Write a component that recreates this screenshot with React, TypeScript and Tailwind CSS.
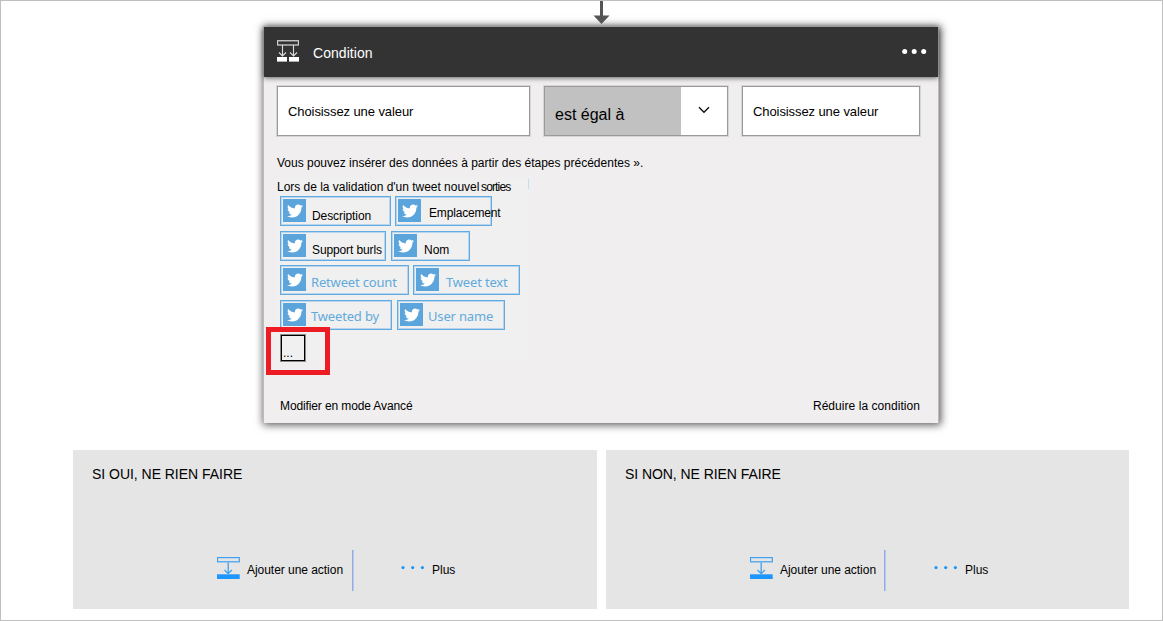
import type { ReactNode } from "react";
import { FaTwitter } from "react-icons/fa";

function ConditionIcon() {
  return (
    <svg width="22" height="22" viewBox="0 0 22 22" fill="none">
      <rect x="0.5" y="0.75" width="21" height="4.25" stroke="#d0d0d0" strokeWidth="1.3" />
      <rect x="0" y="17" width="10" height="4.6" fill="#fff" />
      <rect x="12" y="17" width="10" height="4.6" fill="#fff" />
      <g stroke="#dcdcdc" strokeWidth="1.1">
        <path d="M5.5 5V16M2 12.5L5.5 16L9 12.5" />
        <path d="M16.5 5V16M13 12.5L16.5 16L20 12.5" />
      </g>
    </svg>
  );
}

function ActionIcon() {
  return (
    <svg width="23" height="22" viewBox="0 0 23 22" fill="none">
      <rect x="0.5" y="0.6" width="21.8" height="4.2" stroke="#3f9ff0" strokeWidth="1.2" />
      <rect x="0" y="17.3" width="22.7" height="4.7" fill="#1e96ff" />
      <path d="M11.2 5.5V17M7.5 13L11.2 16.7L14.9 13" stroke="#3f9ff0" strokeWidth="1.3" />
    </svg>
  );
}

function Chip({ box, label, children }: { box: string; label: string; children: ReactNode }) {
  return (
    <div
      className={`flex h-[30px] items-start border border-[#62aadf] pl-[2px] pt-[2px] whitespace-nowrap shadow-[inset_0_0_0_1px_#b5d6ee] ${box}`}
    >
      <div className="flex h-[23px] w-[23px] shrink-0 items-center justify-center bg-[#5ba5dc]">
        <FaTwitter className="h-[16px] w-[16px] text-white" />
      </div>
      <span className={label}>{children}</span>
    </div>
  );
}

function Branch({ box, title, titleSpacing, divider }: { box: string; title: string; titleSpacing: string; divider: string }) {
  return (
    <section className={`h-[159px] bg-[#e5e5e5] pl-[19px] pt-[16px] ${box}`}>
      <h2 className={`text-[14px] leading-4 ${titleSpacing}`}>{title}</h2>
      <div className="mt-[68px] ml-[125px] flex h-[41px] items-start">
        <div className="mt-[7px]">
          <ActionIcon />
        </div>
        <span className="mt-[12px] ml-[7px] w-[105px] whitespace-nowrap text-[12px] leading-4 tracking-[-0.04px]">
          Ajouter une action
        </span>
        <div className={`h-[41px] w-[2px] border-l border-[#90abe6] bg-[#b9c8e8] ${divider}`} />
        <svg className="mt-[15px] ml-[47px]" width="24" height="5" viewBox="0 0 24 5" fill="#1e96f5">
          <circle cx="2" cy="2.6" r="1.6" />
          <circle cx="11.7" cy="2.6" r="1.6" />
          <circle cx="21.4" cy="2.6" r="1.6" />
        </svg>
        <span className="mt-[12px] ml-[7px] text-[12px] leading-4">Plus</span>
      </div>
    </section>
  );
}

export default function App() {
  const blue = "font-['Noto_Sans',sans-serif] text-[13px] leading-4 tracking-[-0.17px] text-[#62aadd]";
  const field = "border border-[#9a9a9a] bg-white shadow-[0_0_0_1px_#d6d5d5]";
  return (
    <div className="flex h-[621px] w-[1163px] flex-col overflow-hidden border border-[#bfbfbf] bg-white font-['Liberation_Sans',Arial,sans-serif] text-black">
      <div className="z-10 h-[25px] shrink-0 pl-[592px]">
        <svg width="17" height="24" viewBox="0 0 17 24">
          <path d="M7 0H10V14.5H16.5L8.5 23L0.5 14.5H7Z" fill="#555" />
        </svg>
      </div>

      <section className="relative ml-[262px] h-[397px] w-[676px] shrink-0 border-x border-t border-[#bbbdbd] bg-[#f0eeef] shadow-[1px_1px_8px_1px_rgba(0,0,0,0.65)]">
        <header className="flex h-[50px] items-start bg-[#333] pl-[13px] text-white shadow-[0_1px_5px_rgba(0,0,0,0.6)]">
          <div className="mt-[13px]">
            <ConditionIcon />
          </div>
          <span className="mt-[18px] ml-[14px] text-[14px] leading-4 tracking-[0.05px]">Condition</span>
          <svg className="mt-[21px] ml-auto mr-[11px]" width="25" height="7" viewBox="0 0 25 7" fill="#fff">
            <circle cx="2.7" cy="3.4" r="2.5" />
            <circle cx="12.2" cy="3.4" r="2.5" />
            <circle cx="21.7" cy="3.4" r="2.5" />
          </svg>
        </header>

        <div className="mt-[9px] ml-[13px] flex h-[50px] gap-[14px] text-[13px] leading-4 tracking-[-0.09px]">
          <div className={`w-[253px] pt-[17px] pl-[10px] ${field}`}>Choisissez une valeur</div>
          <div className={`flex w-[184px] ${field}`}>
            <div className="w-[136px] bg-[#c1c1c1] pt-[20px] pl-[10px] text-[16px] leading-4 tracking-normal">est égal à</div>
            <svg className="mt-[19px] ml-[17px]" width="12" height="8" viewBox="0 0 12 8" fill="none">
              <path d="M1 1.2L6 6.2L11 1.2" stroke="#111" strokeWidth="1.4" />
            </svg>
          </div>
          <div className={`w-[178px] pt-[17px] pl-[10px] ${field}`}>Choisissez une valeur</div>
        </div>

        <p className="mt-[19px] ml-[13px] text-[12px] leading-4">
          Vous pouvez insérer des données à partir des étapes précédentes ».
        </p>

        <div className="mt-[8px] ml-[13px] flex w-[252px] flex-col bg-[#f0f0f0]">
          <div className="flex h-[17px] text-[12px] leading-4 whitespace-pre">
            <span className="w-[204px] tracking-[-0.02px]">{"Lors de la validation d'un tweet nouvel "}</span>
            <span className="tracking-[-0.85px]">sorties</span>
            <div className="ml-auto h-[10px] w-px bg-[#c3dcee]" />
          </div>
          <div className="flex flex-col pl-[3px] text-[12px] leading-4">
            <div className="flex h-[35px] gap-[4px]">
              <Chip box="w-[111px]" label="mt-[9px] ml-[6px] tracking-[-0.08px]">Description</Chip>
              <Chip box="w-[97px]" label="mt-[6px] ml-[8px] tracking-[-0.17px]">Emplacement</Chip>
            </div>
            <div className="flex h-[34px] gap-[5px]">
              <Chip box="w-[106px]" label="mt-[8px] ml-[6px] tracking-[-0.12px]">Support burls</Chip>
              <Chip box="w-[79px]" label="mt-[8px] ml-[7px]">Nom</Chip>
            </div>
            <div className="flex h-[35px] gap-[4px]">
              <Chip box="w-[129px]" label={`mt-[6px] ml-[5px] ${blue}`}>Retweet count</Chip>
              <Chip box="w-[107px]" label={`mt-[6px] ml-[7px] ${blue}`}>Tweet text</Chip>
            </div>
            <div className="flex h-[34px] gap-[5px]">
              <Chip box="w-[112px]" label={`mt-[5px] ml-[5px] ${blue}`}>Tweeted by</Chip>
              <Chip box="w-[108px]" label={`mt-[5px] ml-[5px] ${blue}`}>User name</Chip>
            </div>
            <div className="mt-px ml-px h-[26px] w-[24px] border border-black pt-[9px] pl-px text-[12px] leading-4 shadow-[0_0_0_1px_#8a8a8a]">
              ...
            </div>
          </div>
        </div>
        <div className="absolute top-[300px] left-[2px] h-[48px] w-[64px] border-[5px] border-[#ed1c24]" />

        <footer className="mt-[37px] flex justify-between pr-[18px] pl-[16px] text-[12px] leading-4">
          <span className="tracking-[-0.12px]">Modifier en mode Avancé</span>
          <span className="tracking-[0.05px]">Réduire la condition</span>
        </footer>
      </section>

      <div className="mt-[27px] ml-[72px] flex gap-[9px]">
        <Branch box="w-[524px]" title="SI OUI, NE RIEN FAIRE" titleSpacing="tracking-[-0.03px]" divider="" />
        <Branch box="w-[523px]" title="SI NON, NE RIEN FAIRE" titleSpacing="tracking-[-0.06px]" divider="-ml-px mr-px" />
      </div>
    </div>
  );
}
